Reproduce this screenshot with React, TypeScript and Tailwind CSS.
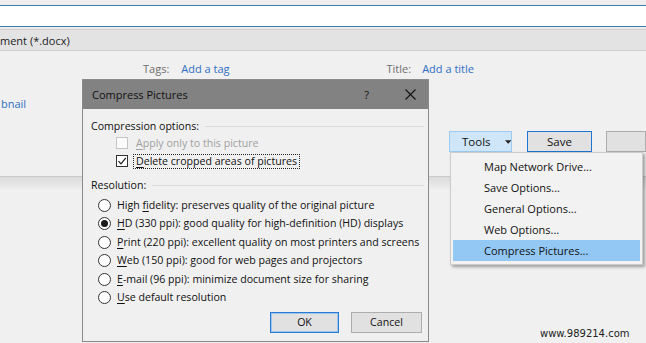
import React from "react";

const Check = () => (
  <svg width="10" height="10" viewBox="0 0 10 10" className="block">
    <polyline points="1.5,5.2 4,7.8 8.8,1.8" fill="none" stroke="#1a1a1a" strokeWidth="1.2" />
  </svg>
);

function CheckRow({ ak, rest, checked, disabled, focused }: { ak: string; rest: string; checked?: boolean; disabled?: boolean; focused?: boolean }) {
  return (
    <div className="flex h-[18px] items-center pl-[33px]">
      <div
        className={
          "flex h-[12px] w-[12px] items-center justify-center border " +
          (disabled ? "border-[#c4c4c4] bg-[#fbfbfb]" : "border-[#333333] bg-white")
        }
      >
        {checked ? <Check /> : null}
      </div>
      <div
        className={
          "ml-[5px] flex h-[15px] items-center border px-[2px] " +
          (focused ? "border-dotted border-[#222]" : "border-transparent")
        }
      >
        <span className={disabled ? "text-[#a0a0a0]" : "text-[#111]"}>
          <span className="underline underline-offset-[2px]">{ak}</span>
          {rest}
        </span>
      </div>
    </div>
  );
}

function RadioRow({ pre, ak, rest, checked }: { pre?: string; ak: string; rest: string; checked?: boolean }) {
  return (
    <div className="flex h-[18.5px] items-center pl-[15px]">
      <div className="flex h-[13px] w-[13px] items-center justify-center rounded-full border border-[#333333] bg-white">
        {checked ? <div className="h-[7px] w-[7px] rounded-full bg-[#1a1a1a]" /> : null}
      </div>
      <span className="ml-[6px] text-[#111]">
        {pre}
        <span className="underline underline-offset-[2px]">{ak}</span>
        {rest}
      </span>
    </div>
  );
}

export default function App() {
  return (
    <div className="relative h-[343px] w-[646px] overflow-hidden bg-[#f0f0f0] font-['Open_Sans',sans-serif] text-[11px] leading-none text-[#111]">
      {/* top strip */}
      <div className="h-[5px] bg-[#eeeeee]" />
      <div className="h-[22px] border-y border-y-[#3b7cbd] bg-white" />
      <div className="h-[2px] bg-[#ececec]" />
      <div className="flex h-[22px] items-center border-y border-y-[#cfcfcf] bg-[#e3e3e3]">
        <span className="ml-0 text-[11px] text-[#1c1c1c]">ment (*.docx)</span>
      </div>

      {/* upper panel */}
      <div className="h-[116px] border-b border-b-[#c9c9c9] bg-[#f0f0f0]">
        <div className="mt-[10px] flex h-[15px] items-center">
          <span className="ml-[143px] text-[#6e6e6e]">Tags:</span>
          <span className="ml-[12px] text-[#2f6fc4]">Add a tag</span>
          <span className="ml-[157px] text-[#6e6e6e]">Title:</span>
          <span className="ml-[11px] text-[#2f6fc4]">Add a title</span>
        </div>
        <div className="mt-[20px] flex h-[15px] items-center">
          <span className="ml-[1px] text-[#2f6fc4]">bnail</span>
        </div>
        <div className="mt-[20px] flex h-[21px] items-stretch">
          <div className="ml-[449px] flex w-[63px] items-center border border-[#9ccaf0] bg-[#cfe5f8]">
            <span className="ml-[12px] text-[11.5px]">Tools</span>
            <svg width="7" height="4" viewBox="0 0 7 4" className="ml-[14px]">
              <polygon points="0,0 7,0 3.5,4" fill="#222" />
            </svg>
          </div>
          <div className="ml-[15px] flex w-[82px] items-center justify-center border border-[#1f74cf] bg-[#e1e1e1] text-[11.5px]">
            Save
          </div>
          <div className="ml-[14px] w-[40px] shrink-0 border border-[#adadad] bg-[#e1e1e1]" />
        </div>
      </div>
      <div className="h-[14px] bg-gradient-to-b from-[#dbdbdb] to-[#f1f1f1]" />

      {/* watermark */}
      <div className="absolute left-[540px] top-[329px] font-['DejaVu_Sans',sans-serif] text-[10px] leading-none text-[#222]">
        www.989214.com
      </div>

      {/* Compress Pictures dialog */}
      <div className="absolute left-[82px] top-[79px] flex h-[263px] w-[347px] flex-col border border-[#8a8a8a] bg-[#f0f0f0] text-[10.6px]">
        <div className="flex h-[29px] items-center bg-[#828282]">
          <span className="ml-[9px] text-[11px] text-[#111]">Compress Pictures</span>
          <span className="ml-auto mr-[36px] text-[11px] text-[#111]">?</span>
          <svg width="11" height="11" viewBox="0 0 11 11" className="mr-[12px]">
            <path d="M0.5 0.5 L10.5 10.5 M10.5 0.5 L0.5 10.5" stroke="#111" strokeWidth="1.1" />
          </svg>
        </div>

        <div className="mt-[9px] flex h-[16px] items-center pl-[8px] pr-[4px]">
          <span className="text-[#111]">Compression options:</span>
          <div className="ml-[6px] h-px flex-1 bg-[#dadada]" />
        </div>
        <CheckRow ak="A" rest="pply only to this picture" disabled />
        <CheckRow ak="D" rest="elete cropped areas of pictures" checked focused />

        <div className="mt-[7px] flex h-[16px] items-center pl-[8px] pr-[4px]">
          <span className="text-[#111]">Resolution:</span>
          <div className="ml-[6px] h-px flex-1 bg-[#dadada]" />
        </div>
        <div className="mt-[3px] flex flex-col">
          <RadioRow pre="High " ak="f" rest="idelity: preserves quality of the original picture" />
          <RadioRow ak="H" rest="D (330 ppi): good quality for high-definition (HD) displays" checked />
          <RadioRow ak="P" rest="rint (220 ppi): excellent quality on most printers and screens" />
          <RadioRow ak="W" rest="eb (150 ppi): good for web pages and projectors" />
          <RadioRow ak="E" rest="-mail (96 ppi): minimize document size for sharing" />
          <RadioRow ak="U" rest="se default resolution" />
        </div>

        <div className="mt-[5px] flex h-[21px] justify-end gap-[12px] pr-[6px]">
          <div className="flex w-[69px] items-center justify-center border border-[#2b7bd3] bg-[#e1e1e1] shadow-[inset_0_0_0_1px_#9cc4ec]">
            OK
          </div>
          <div className="flex w-[71px] items-center justify-center border border-[#adadad] bg-[#e1e1e1]">
            Cancel
          </div>
        </div>
      </div>

      {/* Tools menu */}
      <div className="absolute left-[450px] top-[152px] flex w-[193px] flex-col border border-[#cccccc] bg-[#f2f2f2] py-[3px] text-[11px] shadow-[2px_2px_3px_rgba(0,0,0,0.35)]">
        {["Map Network Drive...", "Save Options...", "General Options...", "Web Options..."].map((t) => (
          <div key={t} className="flex h-[21px] items-center pl-[33px] text-[#111]">
            {t}
          </div>
        ))}
        <div className="mx-[2px] flex h-[21px] items-center bg-[#93c8f5] pl-[31px] text-[#111]">
          Compress Pictures...
        </div>
      </div>
    </div>
  );
}
